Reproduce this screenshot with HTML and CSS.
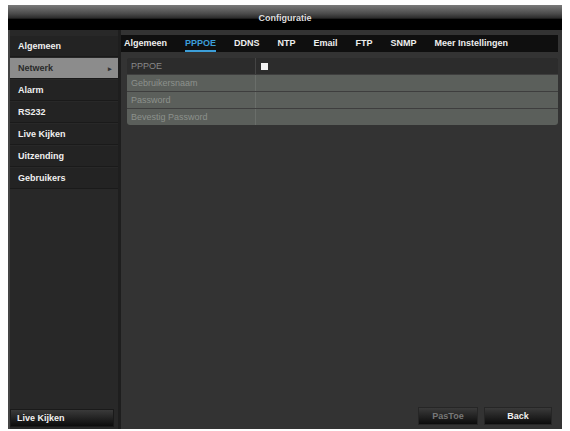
FILE: index.html
```html
<!DOCTYPE html>
<html>
<head>
	<meta charset="utf-8">
	<title>Configuratie</title>
	<link rel="stylesheet" href="styles.css">
</head>
<body>
	<div class="window">
		<div class="title-bar">Configuratie</div>
		<div class="body">
			<div class="side">
				<ul class="menu">
					<li>Algemeen</li>
					<li class="active">Netwerk <span class="arrow">&#9656;</span></li>
					<li>Alarm</li>
					<li>RS232</li>
					<li>Live Kijken</li>
					<li>Uitzending</li>
					<li>Gebruikers</li>
				</ul>
				<div class="side-foot">
					<button class="btn btn-live">Live Kijken</button>
				</div>
			</div>
			<div class="main">
				<div class="tabs">
					<span class="tab">Algemeen</span>
					<span class="tab selected">PPPOE</span>
					<span class="tab">DDNS</span>
					<span class="tab">NTP</span>
					<span class="tab">Email</span>
					<span class="tab">FTP</span>
					<span class="tab">SNMP</span>
					<span class="tab">Meer Instellingen</span>
				</div>
				<div class="form">
					<div class="row row-on">
						<div class="label">PPPOE</div>
						<div class="value"><span class="check"></span></div>
					</div>
					<div class="row row-off">
						<div class="label">Gebruikersnaam</div>
						<div class="value"></div>
					</div>
					<div class="row row-off">
						<div class="label">Password</div>
						<div class="value"></div>
					</div>
					<div class="row row-off">
						<div class="label">Bevestig Password</div>
						<div class="value"></div>
					</div>
				</div>
				<div class="actions">
					<button class="btn btn-dim">PasToe</button>
					<button class="btn btn-back">Back</button>
				</div>
			</div>
		</div>
	</div>
</body>
</html>
```

FILE: styles.css
```css
html, body {
	margin: 0;
	padding: 0;
	background: #fff;
}
body {
	font-family: "Liberation Sans", Arial, sans-serif;
	font-size: 9px;
	color: #eee;
}
.window {
	margin: 5px 8px 0 8px;
	width: 554px;
	height: 424px;
	background: #333;
	display: flex;
	flex-direction: column;
}
.title-bar {
	height: 25px;
	box-sizing: border-box;
	padding-top: 8px;
	text-align: center;
	font-weight: bold;
	color: #ddd;
	background: linear-gradient(#7a7a7a 0, #4a4a4a 35%, #2a2a2a 52%, #000 58%, #000 100%);
}
.body {
	flex: 1;
	display: flex;
}

/* left column */
.side {
	width: 108px;
	background: #282828;
	border-left: 2px solid #444;
	border-right: 3px solid #1e1e1e;
	display: flex;
	flex-direction: column;
	padding-top: 6px;
}
.menu {
	list-style: none;
	margin: 0;
	padding: 0;
}
.menu li {
	height: 21px;
	line-height: 21px;
	margin-bottom: 1px;
	padding-left: 8px;
	font-weight: bold;
	color: #f0f0f0;
	background: #232323;
	border-bottom: 1px solid #1a1a1a;
	box-sizing: border-box;
}
.menu li.active {
	background: #8c8c8c;
	color: #2a2a2a;
	display: flex;
	justify-content: space-between;
	padding-right: 6px;
}
.arrow {
	font-size: 7px;
	color: #333;
}
.side-foot {
	margin-top: auto;
	padding: 0 0 2px 0;
}
.btn {
	font-family: "Liberation Sans", Arial, sans-serif;
	font-size: 9px;
	font-weight: bold;
	color: #f0f0f0;
	border: 1px solid #1a1a1a;
	background: linear-gradient(#3a3a3a, #0c0c0c);
	height: 18px;
	padding: 0;
}
.btn-live {
	width: 104px;
	text-align: left;
	padding-left: 6px;
}

/* right column */
.main {
	flex: 1;
	display: flex;
	flex-direction: column;
	padding: 5px 4px 3px 0;
}
.tabs {
	height: 17px;
	background: #0f0f0f;
	display: flex;
	gap: 18px;
	padding-left: 3px;
	align-items: center;
}
.tab {
	font-weight: bold;
	color: #eee;
	line-height: 13px;
}
.tab.selected {
	color: #3c9ed8;
	border-bottom: 2px solid #3c9ed8;
	margin-top: 2px;
}
.form {
	margin: 6px 0 0 6px;
	border-radius: 3px;
	overflow: hidden;
	background: #2c2c2c;
}
.row {
	display: flex;
	height: 16px;
	line-height: 16px;
	border-bottom: 1px solid #3e3e3e;
}
.row:last-child {
	border-bottom: none;
}
.label {
	width: 124px;
	padding-left: 4px;
	border-right: 1px solid #444;
}
.value {
	flex: 1;
	display: flex;
	align-items: center;
	padding-left: 5px;
}
.row-on {
	background: #2c2c2c;
	color: #888;
}
.row-off {
	background: #5b5f5b;
	color: #8c918c;
}
.row-off .label {
	border-right-color: #6a6e6a;
}
.check {
	width: 7px;
	height: 7px;
	background: #f2f2f2;
}
.actions {
	margin-top: auto;
	display: flex;
	justify-content: flex-end;
	gap: 6px;
	padding-right: 6px;
	padding-bottom: 1px;
}
.actions .btn {
	width: 60px;
	border-color: #262626;
}
.actions .btn-back {
	width: 68px;
}
.btn-dim {
	color: #777;
}
```
